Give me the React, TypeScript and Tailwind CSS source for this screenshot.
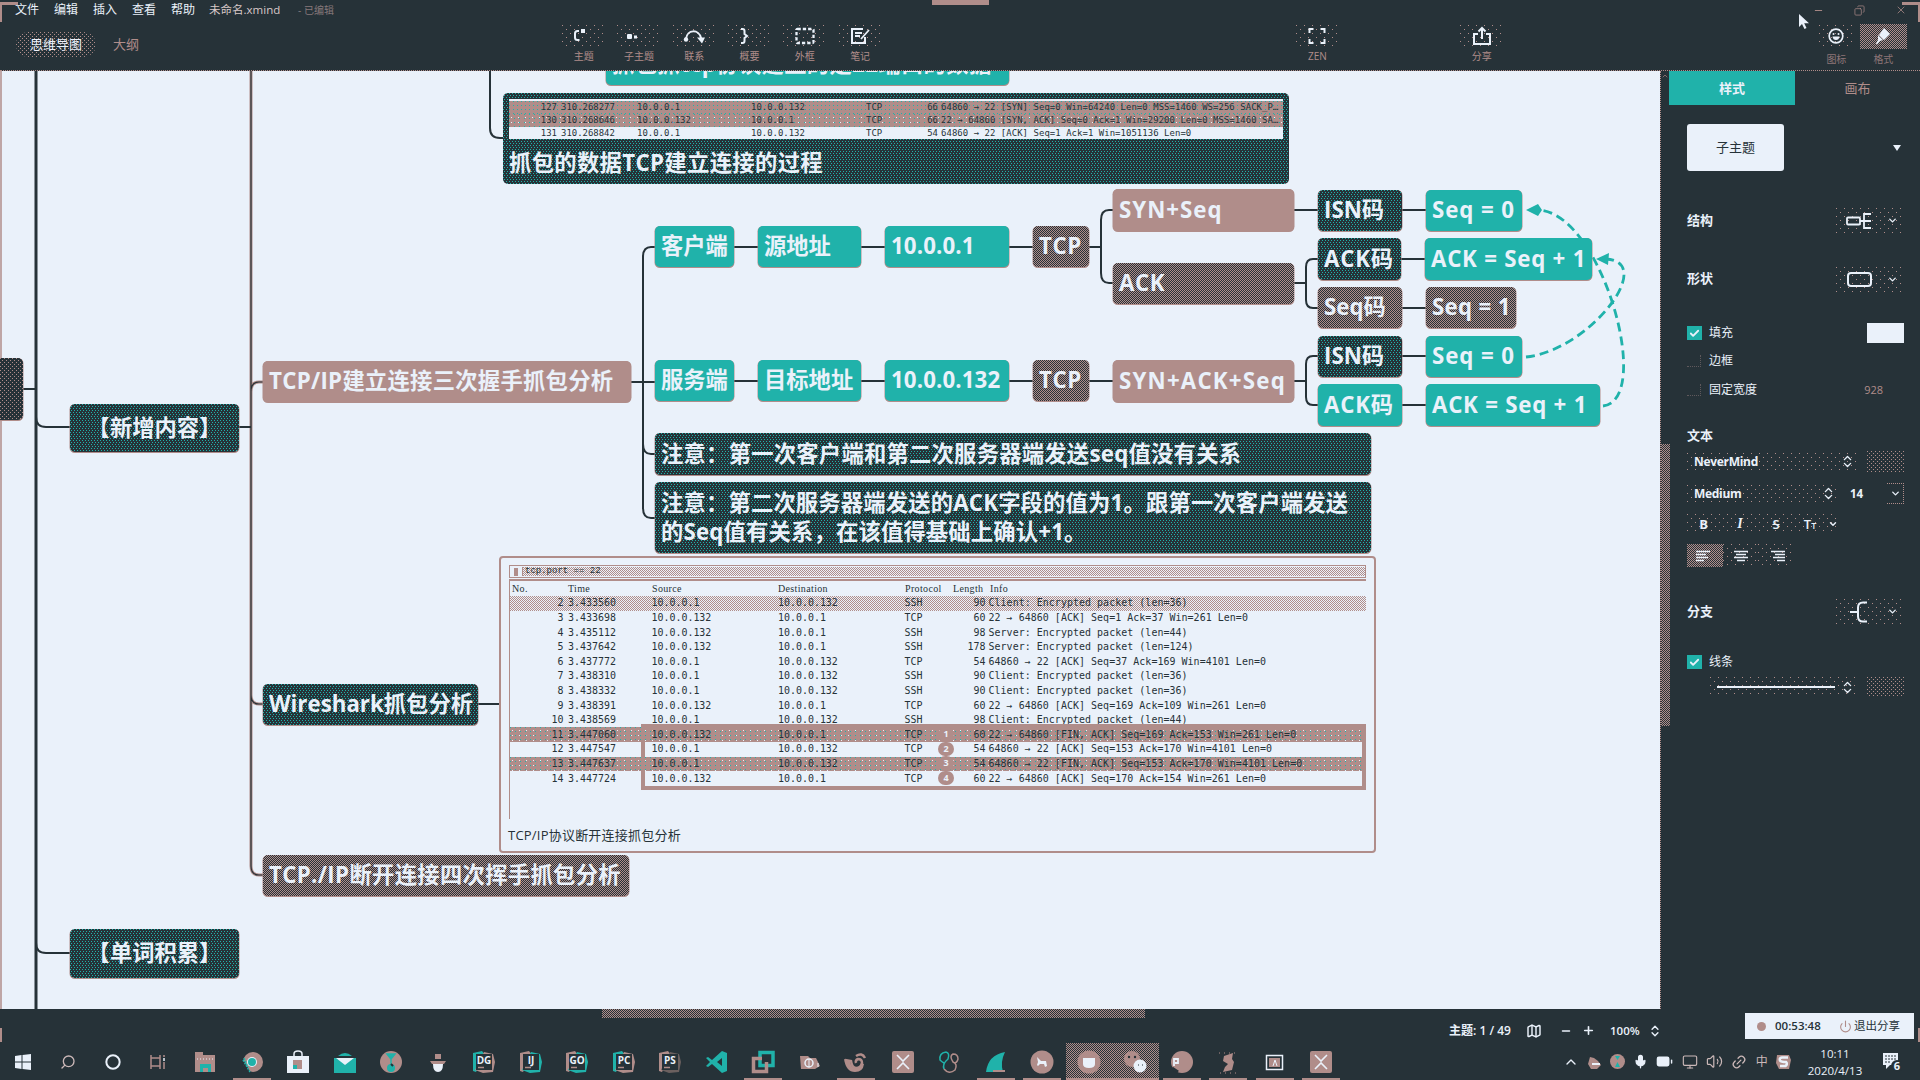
import React from "react";
import {
  Search,
  Circle,
  ChevronDown,
  ChevronUp,
  ChevronsUpDown,
  Minus,
  Plus,
  X,
  Copy,
  Power,
  Map as MapIcon,
  Mic,
  BatteryMedium,
  Monitor,
  Volume2,
  Link2,
  Check,
} from "lucide-react";

const TOP = 71;

/* ---------- textures ---------- */
const tealDots =
  "bg-[#263238] bg-[conic-gradient(from_0deg_at_1px_1px,transparent_75%,#20b2aa_0),conic-gradient(from_0deg_at_1px_1px,transparent_75%,#20b2aa_0)] bg-[length:3px_4px] bg-[position:0_0,1px_2px]";
const checker =
  "bg-[#263238] bg-[conic-gradient(from_0deg_at_1px_1px,transparent_75%,#b08d8a_0),conic-gradient(from_0deg_at_1px_1px,transparent_75%,#b08d8a_0)] bg-[length:2px_2px] bg-[position:0_0,1px_1px]";
const dim =
  "bg-[#263238] bg-[conic-gradient(from_0deg_at_1px_1px,transparent_75%,#b08d8a_0),conic-gradient(from_0deg_at_1px_1px,transparent_75%,#b08d8a_0)] bg-[length:4px_4px] bg-[position:0_0,2px_2px]";
const sparse =
  "bg-[conic-gradient(from_0deg_at_1px_1px,transparent_75%,#b08d8a_0),conic-gradient(from_0deg_at_1px_1px,transparent_75%,#b08d8a_0)] bg-[length:8px_8px] bg-[position:0_0,4px_4px]";
const medium =
  "bg-[conic-gradient(from_0deg_at_1px_1px,transparent_75%,#b08d8a_0),conic-gradient(from_0deg_at_1px_1px,transparent_75%,#b08d8a_0)] bg-[length:4px_4px] bg-[position:0_0,2px_2px]";
const dense =
  "bg-[conic-gradient(from_0deg_at_1px_1px,transparent_75%,#b08d8a_0),conic-gradient(from_0deg_at_1px_1px,transparent_75%,#b08d8a_0)] bg-[length:2px_2px] bg-[position:0_0,1px_1px]";
const roseTeal =
  "bg-[#b08d8a] bg-[conic-gradient(from_0deg_at_1px_1px,transparent_75%,#20b2aa_0)] bg-[length:4px_4px]";
const roseTealLight =
  "bg-[#b08d8a] bg-[conic-gradient(from_0deg_at_1px_1px,transparent_75%,#20b2aa_0),conic-gradient(from_0deg_at_1px_1px,transparent_75%,#eaf1fa_0)] bg-[length:5px_4px,7px_5px] bg-[position:0_0,2px_3px]";

const fills: Record<string, string> = {
  teal: "bg-[#20b2aa]",
  rose: "bg-[#b08d8a]",
  dark: tealDots,
  mix: checker,
  dim,
};

/* ---------- top bar ---------- */
function Tool({ label, children }: { label: string; children: React.ReactNode }) {
  return (
    <div className="flex w-[55.3px] shrink-0 flex-col items-center">
      <div className={`flex h-[21px] w-[43px] items-center justify-center ${sparse}`}>{children}</div>
      <span className="mt-[3px] text-[10px] leading-[14px] whitespace-nowrap text-[#b08d8a]">{label}</span>
    </div>
  );
}

const sv = { fill: "none", stroke: "#eaf1fa", strokeWidth: 2 } as const;

function Header() {
  return (
    <header className="relative h-[71px] shrink-0 border-b border-dotted border-[#b08d8a] bg-[#263238]">
      <div className="absolute top-[2px] left-0 h-[20px] w-[18px] border-t-[3px] border-l-2 border-[#b08d8a]" />
      <div className="absolute top-[2px] right-0 h-[20px] w-[18px] border-t-[3px] border-r-2 border-[#b08d8a]" />
      <div className="absolute top-0 left-[932px] h-[5px] w-[57px] bg-[#b08d8a]" />
      <div className="flex h-[20px] items-center gap-[15px] pl-[15px] text-[12px] leading-none text-[#eaf1fa]">
        <span>文件</span>
        <span>编辑</span>
        <span>插入</span>
        <span>查看</span>
        <span>帮助</span>
        <span className="-ml-px w-[74px] text-[11.500px] whitespace-nowrap text-[#d8c8c8]">未命名.xmind</span>
        <span className="text-[10px] whitespace-nowrap text-[#87797b]">- 已编辑</span>
        <div className="ml-auto flex items-center gap-[30px] pr-[13px] text-[#b08d8a]">
          <Minus size={11} strokeWidth={2} />
          <Copy size={11} strokeWidth={1.5} className="-scale-x-100" />
          <X size={12} strokeWidth={1.5} />
        </div>
      </div>
      <div className="flex h-[50px]">
        <div className="flex w-[556px] items-start pt-[12px] pl-[16px]">
          <div className={`flex h-[25px] w-[80px] items-center justify-center rounded-full text-[13px] text-[#eaf1fa] ${medium}`}>思维导图</div>
          <span className="ml-[17px] text-[13px] leading-[25px] text-[#b08d8a]">大纲</span>
        </div>
        <div className="flex pt-[5px]">
          <Tool label="主题">
            <svg width="20" height="18" viewBox="0 0 20 18" {...sv} className="mr-2">
              <path d="M9 4H7.500Q5 4 5 6.500v4Q5 13 7.500 13H9.500" />
              <rect x="11" y="2" width="4" height="4" fill="#eaf1fa" stroke="none" />
            </svg>
          </Tool>
          <Tool label="子主题">
            <svg width="20" height="16" viewBox="0 0 20 16" className="mr-3" fill="#eaf1fa">
              <rect x="4" y="6" width="5" height="5" rx="1" />
              <rect x="11" y="7.500" width="3" height="3" />
            </svg>
          </Tool>
          <Tool label="联系">
            <svg width="22" height="16" viewBox="0 0 22 16" {...sv}>
              <path d="M3 11C4 1 16 1 18 10" />
              <circle cx="3" cy="11.5" r="2.200" fill="#eaf1fa" stroke="none" />
              <path d="M14 9.500h8l-3 6z" fill="#eaf1fa" stroke="none" />
            </svg>
          </Tool>
          <Tool label="概要">
            <svg width="20" height="18" viewBox="0 0 20 18" {...sv} className="mr-3">
              <path d="M7 2h1.500q2 0 2 2v3l2.500 2-2.500 2v3q0 2-2 2H7" />
            </svg>
          </Tool>
          <Tool label="外框">
            <svg width="20" height="18" viewBox="0 0 20 18" {...sv} strokeWidth="2.300" strokeDasharray="3.300 2">
              <rect x="1.500" y="2" width="17" height="14" rx="1" />
            </svg>
          </Tool>
          <Tool label="笔记">
            <svg width="20" height="18" viewBox="0 0 20 18" {...sv}>
              <path d="M13 2H2v14h13V10" />
              <path d="M5 6h7M5 9h5M19 3l-8 9" strokeWidth="1.800" />
            </svg>
          </Tool>
        </div>
        <div className="flex pt-[5px] pl-[402px]">
          <Tool label="ZEN">
            <svg width="20" height="18" viewBox="0 0 20 18" {...sv}>
              <path d="M2.500 6V2h4M13.500 2h4v4M17.500 12v4h-4M6.500 16h-4v-4" />
            </svg>
          </Tool>
        </div>
        <div className="flex pt-[5px] pl-[109px]">
          <Tool label="分享">
            <svg width="20" height="20" viewBox="0 0 20 20" {...sv}>
              <path d="M6 8H2v10h16V8h-4M10 13V3M6.500 5.500L10 2l3.500 3.500" />
            </svg>
          </Tool>
        </div>
        <div className="flex pl-[303px]">
          <div className="flex w-[48px] flex-col items-center pt-[5px]">
            <div className={`flex h-[21px] w-[34px] items-center justify-center ${sparse}`}>
              <svg width="16" height="16" viewBox="0 0 16 16" {...sv} strokeWidth="1.700">
                <circle cx="8" cy="8" r="6.800" />
                <path d="M4.500 8.500h7Q11 12 8 12T4.500 8.500" fill="#eaf1fa" stroke="none" />
                <circle cx="5.500" cy="6" r="1" fill="#eaf1fa" stroke="none" />
                <circle cx="10.500" cy="6" r="1" fill="#eaf1fa" stroke="none" />
              </svg>
            </div>
            <span className="mt-[6px] text-[10px] leading-[14px] text-[#8d7577]">图标</span>
          </div>
          <div className="-ml-px flex w-[48px] flex-col items-center pt-[4px]">
            <div className={`flex h-[25px] w-[47px] items-center justify-center ${checker}`}>
              <svg width="18" height="17" viewBox="0 0 18 17" fill="#eaf1fa">
                <path d="M10 0l6 6-6 6-5-5z" />
                <path d="M4 7l5 5-3 1-3 3.500-1-1 2-3.500z" />
              </svg>
            </div>
            <span className="mt-[3px] text-[10px] leading-[14px] text-[#8d7577]">格式</span>
          </div>
        </div>
      </div>
      <svg className="absolute top-[13px] left-[1798px]" width="12" height="17" viewBox="0 0 12 17" fill="#eaf1fa">
        <path d="M1 1v13l3-3 2.500 5 2-1-2.300-4.800H11z" />
      </svg>
    </header>
  );
}

/* ---------- mind map ---------- */
type N = [x: number, y: number, r: number, b: number, fill: string, text: string, tracking?: number];
const nodes: N[] = [
  [606, 44, 1009, 85, "teal", "抓包抓tcp协议建立的是22端口的数据", 0.35],
  [655, 226, 734, 267, "teal", "客户端"],
  [758, 226, 861, 267, "teal", "源地址"],
  [885, 226, 1009, 267, "teal", "10.0.0.1", 0.1],
  [1033, 226, 1089, 267, "mix", "TCP", 0.6],
  [655, 360, 734, 401, "teal", "服务端"],
  [758, 360, 861, 401, "teal", "目标地址"],
  [885, 360, 1009, 401, "teal", "10.0.0.132", 0.1],
  [1033, 360, 1089, 401, "mix", "TCP", 0.6],
  [1113, 189, 1294, 231, "rose", "SYN+Seq", 1],
  [1113, 263, 1294, 304, "mix", "ACK", 0.6],
  [1113, 360, 1294, 402, "rose", "SYN+ACK+Seq", 1.2],
  [1318, 190, 1402, 231, "dark", "ISN码"],
  [1318, 238, 1401, 280, "dark", "ACK码", 0.8],
  [1318, 287, 1402, 328, "mix", "Seq码"],
  [1318, 336, 1402, 377, "dark", "ISN码"],
  [1318, 384, 1402, 426, "teal", "ACK码", 0.8],
  [1426, 190, 1522, 231, "teal", "Seq = 0", 0.9],
  [1425, 238, 1592, 280, "teal", "ACK = Seq + 1", 0.75],
  [1426, 287, 1516, 328, "mix", "Seq = 1", 0.3],
  [1426, 336, 1522, 377, "teal", "Seq = 0", 0.9],
  [1426, 384, 1600, 426, "teal", "ACK = Seq + 1", 0.75],
  [655, 433, 1371, 475, "dark", "注意：第一次客户端和第二次服务器端发送seq值没有关系", 0.25],
  [655, 482, 1371, 553, "dark", "注意：第二次服务器端发送的ACK字段的值为1。跟第一次客户端发送\n的Seq值有关系，在该值得基础上确认+1。", 0.18],
  [263, 361, 631, 402, "rose", "TCP/IP建立连接三次握手抓包分析", 0.28],
  [70, 404, 239, 452, "dark", "【新增内容】"],
  [263, 684, 478, 725, "dark", "Wireshark抓包分析"],
  [263, 855, 629, 896, "mix", "TCP./IP断开连接四次挥手抓包分析", 0.33],
  [70, 929, 239, 978, "dark", "【单词积累】"],
  [-20, 358, 23, 420, "dim", ""],
];

const links = [
  "M490 60V128Q490 138 500 138H503",
  "M23 389H36",
  "M36 60V1010",
  "M36 417Q36 427 46 427H70",
  "M36 943Q36 953 46 953H70",
  "M239 427H251",
  "M631 382H655",
  "M655 247H651Q643 247 643 257V508Q643 518 651 518H655",
  "M643 444Q643 454 651 454H655",
  "M734 247H758M861 247H885M1009 247H1033M1089 247H1101",
  "M734 381H758M861 381H885M1009 381H1033M1089 381H1113",
  "M1113 210H1109Q1101 210 1101 220V273Q1101 283 1109 283H1113",
  "M1294 210H1318M1294 283H1306M1294 381H1306",
  "M1318 259H1313Q1306 259 1306 267V300Q1306 308 1313 308H1318",
  "M1318 356H1313Q1306 356 1306 364V397Q1306 405 1313 405H1318",
  "M1402 210H1426M1401 259H1426M1402 308H1426M1402 356H1426M1402 405H1426",
  "M478 704H502",
];
const branch = "M251 60V866Q251 875 259 875H263M251 695Q251 704 259 704H263M251 392Q251 382 259 382H263";

function Links() {
  return (
    <svg className="absolute top-0 left-0" width="1660" height="938" viewBox="0 71 1660 938" fill="none">
      <path d="M1 60V1010" stroke="#b08d8a" strokeWidth="1.500" />
      <path d={branch} stroke="#b08d8a" strokeWidth="3" />
      <path d={branch} stroke="#263238" strokeWidth="1.200" />
      {links.map((d) => (
        <path key={d} d={d} stroke="#263238" strokeWidth={d === "M36 60V1010" ? 3 : 2} />
      ))}
      <g stroke="#20b2aa" strokeWidth="2.800" strokeDasharray="9 5">
        <path d="M1603 406C1654 400 1602 212 1538 210" />
        <path d="M1526 357C1590 350 1657 262 1606 259" />
      </g>
      <g fill="#20b2aa">
        <path d="M1526 210l12-6 4 6-4 6z" />
        <path d="M1596 259l13-6-1 12z" />
      </g>
    </svg>
  );
}

function MapNode({ n }: { n: N }) {
  const [x, y, r, b, fill, text, tracking = 0] = n;
  const centered = text.startsWith("【");
  return (
    <div
      className={`absolute flex items-center rounded-[5px] px-[6px] pb-[2px] text-[22.3px] leading-[29px] font-bold whitespace-pre text-[#eaf1fa] shadow-[0_0.5px_0_0.5px_#b08d8a] ${centered ? "justify-center" : ""} ${fills[fill]}`}
      style={{ left: x, top: y - TOP, width: r - x, height: b - y, letterSpacing: tracking }}
    >
      {text}
    </div>
  );
}

const topRows = [
  ["127", "310.268277", "10.0.0.1", "10.0.0.132", "66", "64860 → 22 [SYN] Seq=0 Win=64240 Len=0 MSS=1460 WS=256 SACK_P…"],
  ["130", "310.268646", "10.0.0.132", "10.0.0.1", "66", "22 → 64860 [SYN, ACK] Seq=0 Ack=1 Win=29200 Len=0 MSS=1460 SA…"],
  ["131", "310.268842", "10.0.0.1", "10.0.0.132", "54", "64860 → 22 [ACK] Seq=1 Ack=1 Win=1051136 Len=0"],
];

function CaptureTop() {
  return (
    <div className={`absolute top-[22px] left-[503px] h-[91px] w-[786px] rounded-[5px] px-[6px] pt-[6px] ${tealDots}`}>
      <div className="h-[40px] w-[774px] overflow-hidden border-t-2 border-[#eaf1fa] bg-[#eaf1fa] font-['DejaVu_Sans_Mono',monospace] text-[8.95px] leading-[13px] text-[#263238]">
        {topRows.map((r, i) => (
          <div key={i} className={`flex h-[13px] whitespace-pre ${i === 0 ? roseTeal : i === 1 ? roseTealLight : "bg-[#eaf1fa]"}`}>
            <span className="w-[48px] text-right">{r[0]}</span>
            <span className="w-[80px] pl-[4px]">{r[1]}</span>
            <span className="w-[114px]">{r[2]}</span>
            <span className="w-[115px]">{r[3]}</span>
            <span className="w-[40px]">TCP</span>
            <span className="w-[32px] text-right">{r[4]}</span>
            <span className="pl-[3px] tracking-[0.06px]">{r[5]}</span>
          </div>
        ))}
      </div>
      <div className="pt-[9px] text-[22.3px] leading-[30px] font-bold tracking-[0.35px] whitespace-nowrap text-[#eaf1fa]">抓包的数据TCP建立连接的过程</div>
    </div>
  );
}

const A = "10.0.0.1";
const B = "10.0.0.132";
const rows: string[][] = [
  ["2", "3.433560", A, B, "SSH", "90", "Client: Encrypted packet (len=36)"],
  ["3", "3.433698", B, A, "TCP", "60", "22 → 64860 [ACK] Seq=1 Ack=37 Win=261 Len=0"],
  ["4", "3.435112", B, A, "SSH", "98", "Server: Encrypted packet (len=44)"],
  ["5", "3.437642", B, A, "SSH", "178", "Server: Encrypted packet (len=124)"],
  ["6", "3.437772", A, B, "TCP", "54", "64860 → 22 [ACK] Seq=37 Ack=169 Win=4101 Len=0"],
  ["7", "3.438310", A, B, "SSH", "90", "Client: Encrypted packet (len=36)"],
  ["8", "3.438332", A, B, "SSH", "90", "Client: Encrypted packet (len=36)"],
  ["9", "3.438391", B, A, "TCP", "60", "22 → 64860 [ACK] Seq=169 Ack=109 Win=261 Len=0"],
  ["10", "3.438569", A, B, "SSH", "98", "Client: Encrypted packet (len=44)"],
  ["11", "3.447060", B, A, "TCP", "60", "22 → 64860 [FIN, ACK] Seq=169 Ack=153 Win=261 Len=0"],
  ["12", "3.447547", A, B, "TCP", "54", "64860 → 22 [ACK] Seq=153 Ack=170 Win=4101 Len=0"],
  ["13", "3.447637", A, B, "TCP", "54", "64860 → 22 [FIN, ACK] Seq=153 Ack=170 Win=4101 Len=0"],
  ["14", "3.447724", B, A, "TCP", "60", "22 → 64860 [ACK] Seq=170 Ack=154 Win=261 Len=0"],
];

function Capture() {
  return (
    <div className="absolute top-[485px] left-[499px] h-[297px] w-[877px] rounded-[4px] border-2 border-[#b08d8a] bg-[#eaf1fa] pt-[7px] pl-[8px] text-[#263238]">
      <div className="flex h-[13px] w-[857px] items-center border border-[#b08d8a]">
        <span className="ml-[4px] h-[8px] w-[4px] bg-[#b08d8a]" />
        <span className={`ml-[4px] flex h-[9px] flex-1 items-center border-l border-[#b08d8a] pl-[2px] font-['Liberation_Mono',monospace] text-[9px] leading-none whitespace-pre ${dense}`}>tcp.port == 22</span>
      </div>
      <div className="relative mt-[1px] h-[240px] w-[857px] border-t-2 border-l border-[#b08d8a]">
        <div className="flex h-[15px] items-center font-['Liberation_Serif',serif] text-[10px] leading-none tracking-[0.35px]">
          <span className="w-[58px] pl-[2px]">No.</span>
          <span className="w-[84px]">Time</span>
          <span className="w-[126px]">Source</span>
          <span className="w-[127px]">Destination</span>
          <span className="w-[48px]">Protocol</span>
          <span className="w-[37px]">Length</span>
          <span>Info</span>
        </div>
        <div className="font-['DejaVu_Sans_Mono',monospace] text-[9.95px] leading-[14px]">
          {rows.map((r, i) => (
            <div key={r[0]} className={`flex h-[14.62px] items-center whitespace-pre ${i === 0 ? dense : i === 9 || i === 11 ? roseTealLight : ""}`}>
              <span className="w-[53.5px] text-right">{r[0]}</span>
              <span className="w-[88px] pl-[4.5px]">{r[1]}</span>
              <span className="w-[126.500px]">{r[2]}</span>
              <span className="w-[126.500px]">{r[3]}</span>
              <span className="w-[40px]">{r[4]}</span>
              <span className="w-[41px] text-right">{r[5]}</span>
              <span className="pl-[3px] tracking-[0.05px]">{r[6]}</span>
            </div>
          ))}
        </div>
        <div className="absolute top-[143px] right-0 h-[66px] w-[725px] border-4 border-[#b08d8a]" />
        <div className="absolute top-[143px] left-[428px] flex flex-col text-center text-[9px] leading-[14.6px] font-bold text-[#eaf1fa]">
          {["1", "2", "3", "4"].map((d) => (
            <span key={d} className="h-[14.6px] w-[16px] translate-y-[3px] rounded-full bg-[#b08d8a]">
              {d}
            </span>
          ))}
        </div>
      </div>
      <div className="mt-[6px] -ml-px text-[13px] leading-[20px] tracking-[0.22px] whitespace-nowrap">TCP/IP协议断开连接抓包分析</div>
    </div>
  );
}

/* ---------- format panel ---------- */
const Stepper = () => <ChevronsUpDown size={15} strokeWidth={2.2} className="text-[#eaf1fa]" />;
const Tick = () => (
  <span className="flex h-[14px] w-[15px] items-center justify-center bg-[#20b2aa]">
    <Check size={11} strokeWidth={4} />
  </span>
);
const Empty = () => <span className="h-[12px] w-[14px] border-r border-b border-dotted border-[#5f595c]" />;

function Drop({ children }: { children: React.ReactNode }) {
  return (
    <div className={`ml-auto flex h-[25px] w-[68px] items-center pl-[6px] ${sparse}`}>
      <div className="flex w-[34px] justify-center">{children}</div>
      <ChevronDown size={11} strokeWidth={3} className="ml-[11px]" />
    </div>
  );
}

function Lines({ d }: { d: string }) {
  return (
    <svg width="14" height="12" viewBox="0 0 14 12" stroke="#eaf1fa" strokeWidth="1.500">
      <path d={d} />
    </svg>
  );
}

function Panel() {
  return (
    <aside className="flex w-[260px] bg-[#263238] text-[12px] text-[#eaf1fa]">
      <div className="flex w-[10px] shrink-0 flex-col border-l border-dotted border-[#b08d8a]">
        <ChevronUp size={8} className="mt-px text-[#b08d8a]" />
        <div className={`mt-[364px] h-[282px] w-[9px] ${checker}`} />
      </div>
      <div className="flex flex-1 flex-col">
        <div className="-ml-px flex h-[34px] text-[13px]">
          <div className="flex w-[126px] items-center justify-center bg-[#20b2aa] pt-px font-bold">样式</div>
          <div className="flex flex-1 items-center justify-center pt-px text-[#b08d8a]">画布</div>
        </div>
        <div className="flex flex-col pr-[16px] pl-[17px]">
          <div className="mt-[19px] flex h-[47px] items-center justify-between">
            <div className="flex h-[47px] w-[97px] items-center justify-center rounded-[3px] bg-[#eaf1fa] text-[13px] text-[#263238]">子主题</div>
            <svg width="8" height="6" viewBox="0 0 8 6" className="mr-[3px]" fill="#eaf1fa">
              <path d="M0 0h8L4 6z" />
            </svg>
          </div>
          <div className="mt-[37px] flex h-[25px] items-center text-[13px] font-bold">
            结构
            <Drop>
              <svg width="26" height="18" viewBox="0 0 26 18" fill="none" stroke="#eaf1fa" strokeWidth="1.800">
                <rect x="1" y="5.500" width="13" height="7" rx="1" />
                <path d="M14 9h11M25 2h-7v14h7" />
              </svg>
            </Drop>
          </div>
          <div className="mt-[33px] flex h-[26px] items-center text-[13px] font-bold">
            形状
            <Drop>
              <span className="h-[15px] w-[25px] rounded-[4px] border-2 border-[#eaf1fa]" />
            </Drop>
          </div>
          <div className="mt-[31px] flex h-[20px] items-center gap-[7px]">
            <Tick />
            填充
            <span className="ml-auto h-[20px] w-[37px] bg-[#eaf1fa]" />
          </div>
          <div className="mt-[8px] flex h-[20px] items-center gap-[8px]">
            <Empty />
            边框
          </div>
          <div className="mt-[9px] flex h-[20px] items-center gap-[8px]">
            <Empty />
            固定宽度
            <span className="mr-[21px] ml-auto text-[11px] text-[#b08d8a]">928</span>
          </div>
          <div className="mt-[26px] flex h-[20px] items-center text-[13px] font-bold">文本</div>
          <div className="mt-[5px] flex h-[21px] items-center justify-between text-[12px] font-bold">
            <div className={`flex h-[18px] w-[171px] items-center justify-between pr-[3px] pl-[7px] ${sparse}`}>
              <span className="tracking-[-0.3px]">NeverMind</span>
              <Stepper />
            </div>
            <span className={`h-[21px] w-[37px] ${medium}`} />
          </div>
          <div className="mt-[11px] flex h-[21px] items-center font-bold">
            <div className={`flex h-[18px] w-[151px] items-center justify-between pr-[2px] pl-[7px] ${sparse}`}>
              <span className="tracking-[-0.3px]">Medium</span>
              <Stepper />
            </div>
            <span className="ml-[12px] text-[11.500px]">14</span>
            <span className="ml-auto flex h-[21px] w-[17px] items-center justify-center border border-l-0 border-dotted border-[#b08d8a]">
              <ChevronDown size={11} strokeWidth={3} />
            </span>
          </div>
          <div className={`mt-[10px] flex h-[20px] w-[151px] items-center text-[13px] leading-none font-semibold ${sparse}`}>
            <span className="w-[33px] text-center font-bold">B</span>
            <span className="w-[40px] text-center font-['Liberation_Serif',serif] text-[14px] italic">I</span>
            <span className="w-[32px] text-center line-through">S</span>
            <span className="w-[36px] text-center">
              T<span className="text-[9px]">T</span>
            </span>
            <ChevronDown size={10} strokeWidth={3.5} />
          </div>
          <div className="mt-[10px] flex h-[23px]">
            <span className={`flex w-[36px] items-center justify-center pr-[4px] ${checker}`}>
              <Lines d="M0 1.500h14M0 4.500h10M0 7.500h12M0 10.500h8" />
            </span>
            <span className={`flex w-[35px] items-center justify-center ${sparse}`}>
              <Lines d="M0 1.500h14M2 4.500h10M0 7.500h14M3 10.500h8" />
            </span>
            <span className={`flex w-[36px] items-center justify-center pl-[4px] ${sparse}`}>
              <Lines d="M0 1.500h14M4 4.500h10M2 7.500h12M6 10.500h8" />
            </span>
          </div>
          <div className="mt-[32px] flex h-[25px] items-center text-[13px] font-bold">
            分支
            <Drop>
              <svg width="18" height="22" viewBox="0 0 18 22" fill="none" stroke="#eaf1fa" strokeWidth="2">
                <path d="M0 11h8M17 1.500h-4q-5 0-5 5v9q0 5 5 5h4" />
              </svg>
            </Drop>
          </div>
          <div className="mt-[28px] flex h-[20px] items-center gap-[7px]">
            <Tick />
            线条
          </div>
          <div className="mt-[5px] flex h-[20px] items-center justify-between pl-[23px]">
            <div className={`flex h-[20px] w-[148px] items-center justify-between pr-[3px] pl-[7px] ${sparse}`}>
              <span className="h-[2px] w-[118px] bg-[#eaf1fa]" />
              <Stepper />
            </div>
            <span className={`h-[20px] w-[37px] ${medium}`} />
          </div>
        </div>
      </div>
    </aside>
  );
}

/* ---------- status bar ---------- */
function StatusBar() {
  return (
    <div className="relative h-[34px] shrink-0 bg-[#263238] text-[12px] text-[#eaf1fa]">
      <div className={`ml-[602px] h-[9px] w-[543px] ${checker}`} />
      <div className="flex h-[25px] items-center pl-[1449px] font-semibold">
        <span className="w-[77px] whitespace-nowrap">主题: 1 / 49</span>
        <MapIcon size={16} strokeWidth={2.2} />
        <Minus size={12} strokeWidth={3} className="ml-[18px]" />
        <Plus size={13} strokeWidth={3} className="ml-[10px]" />
        <span className="ml-[15px] w-[38px] text-[11.500px]">100%</span>
        <ChevronsUpDown size={14} strokeWidth={2.4} />
      </div>
      <div className="absolute top-[4px] left-[1745px] z-10 flex h-[26px] w-[169px] items-center bg-[#eaf1fa] pl-[12px] text-[12px] text-[#263238]">
        <span className="h-[9px] w-[9px] rounded-full bg-[#b08d8a]" />
        <span className="ml-[9px] w-[64px] text-[11.500px] font-semibold">00:53:48</span>
        <Power size={13} strokeWidth={2} className="mr-[2px] text-[#b08d8a]" />
        <span className="text-[11.500px] whitespace-nowrap">退出分享</span>
      </div>
      <div className="absolute top-[19px] left-0 h-[14px] w-[2px] bg-[#b08d8a]" />
      <div className="absolute top-[19px] right-0 h-[14px] w-[2px] bg-[#b08d8a]" />
    </div>
  );
}

/* ---------- taskbar ---------- */
const R = "#b08d8a";
const T = "#20b2aa";
const W = "#eaf1fa";
const D = "#263238";

function Ide({ t, a, b }: { t: string; a: string; b: string }) {
  return (
    <svg width="24" height="24" viewBox="0 0 24 24">
      <path d="M1 3l9-2 3 4-9 17-3-1z" fill={a} />
      <path d="M12 2l9 2 2 8-2 10-10 1-8-3z" fill={b} />
      <rect x="4" y="4" width="16" height="16" fill={D} />
      <text x="12" y="14" textAnchor="middle" fontSize="10" fontWeight="700" fill={W} fontFamily="Open Sans, sans-serif">{t}</text>
      <path d="M6 17.500h6" stroke={R} strokeWidth="1.500" />
    </svg>
  );
}

const XTile = () => (
  <svg width="24" height="24" viewBox="0 0 24 24">
    <rect x="1" y="1" width="22" height="22" rx="2" fill={R} />
    <path d="M6 5l6 6 6-6M6 19l6-6 6 6" stroke={W} strokeWidth="1.600" fill="none" />
  </svg>
);

const G = ({ children }: { children: React.ReactNode }) => (
  <svg width="24" height="24" viewBox="0 0 24 24" fill="none">
    {children}
  </svg>
);

const apps: { icon: React.ReactNode; on?: boolean; active?: boolean }[] = [
  { icon: <G><path d="M2 2h8v3h12v17H2z" fill={R} /><path d="M7 22v-8h11v8h-3v-4h-5v4z" fill={T} /><path d="M4 9h16" stroke={W} strokeDasharray="1 2" /></G> },
  { icon: <G><circle cx="13" cy="12" r="10" fill={R} /><path d="M3 9l8 14-6-4q-3-4-2-10" fill={D} /><path d="M3 10l7 12M4 8l4 9" stroke={T} strokeWidth="1.500" strokeDasharray="2 1" /><circle cx="12" cy="12" r="5" fill={W} /><circle cx="12" cy="12" r="4" fill={T} /></G>, on: true },
  { icon: <G><path d="M8 7V4q0-3 4-3t4 3v3" stroke={W} strokeWidth="1.500" /><rect x="1" y="6" width="22" height="17" fill={W} /><path d="M7 10h9v9H7z" fill={R} /><path d="M7 15h4v4H7z" fill={T} /></G> },
  { icon: <G><path d="M1 8h22v15H1z" fill={T} /><path d="M3 8h18l-9 7z" fill={W} /><path d="M5 6q7-6 14 0z" fill={T} /></G> },
  { icon: <G><circle cx="12" cy="12" r="11" fill={R} /><path d="M8 4h8l-4 5zM12 8v8" fill={T} stroke={T} strokeWidth="1.500" /><circle cx="12" cy="18" r="4" fill={T} /><path d="M12 14l2 2" stroke={D} strokeWidth="2" /></G> },
  { icon: <G><path d="M9 4h6v5H9z" fill={R} /><path d="M4 11h16l-2 3H6z" fill={R} /><path d="M7 14h10q0 8-5 8t-5-8" fill={W} /></G> },
  { icon: <Ide t="DG" a={T} b={R} /> },
  { icon: <Ide t="IJ" a={R} b={T} /> },
  { icon: <Ide t="GO" a={R} b={T} /> },
  { icon: <Ide t="PC" a={T} b={R} /> },
  { icon: <Ide t="PS" a={R} b="#6b605f" /> },
  { icon: <G><path d="M17 1l5 2v18l-5 2L7 14l-4 3-2-1 4-4-4-4 2-1 4 3zM17 8l-5 4 5 4z" fill={T} fillRule="evenodd" /></G> },
  { icon: <G><rect x="9" y="2.500" width="13" height="13" stroke={T} strokeWidth="3.500" /><path d="M15.500 12v9.500h-13v-13H11" stroke={R} strokeWidth="3.500" /></G>, on: true },
  { icon: <G><path d="M2 6h8l2 2h6l4 8-5 3H3z" fill={R} /><circle cx="11" cy="13" r="4" stroke={W} strokeWidth="1.500" /><path d="M11 9v8M20 13v4" stroke={W} /></G> },
  { icon: <G><path d="M1 10l6 1q1 7 5 7 5 0 6-5 0-4-4-4-3 1-2 4" stroke={R} strokeWidth="2.500" /><path d="M0 9q2 13 11 13 8 0 9-8l-3-1q-1 5-6 5-4 0-5-7z" fill={R} /><path d="M12 6q6-4 9 2" stroke={R} strokeWidth="2.500" /></G>, on: true },
  { icon: <XTile /> },
  { icon: <G><path d="M9 2q4 1 2 7-6 5-4 10M9 2Q2 3 3 10q2 2 4 3" stroke={T} strokeWidth="1.500" /><path d="M7 19q5 6 11 1 3-6-2-8-4-6 0-8 5 0 5 5-1 4-4 4" stroke={R} strokeWidth="1.500" /></G> },
  { icon: <G><path d="M2 22Q4 5 21 2q-5 10-2 20z" fill={T} /><path d="M9 21h12" stroke={R} strokeWidth="2" /></G>, on: true },
  { icon: <G><circle cx="12" cy="12" r="11.500" fill={R} /><path d="M7 7l4 4h5l1 5-2 1-1-3h-4l-2 2-1-1 1-3z" fill={W} /></G>, on: true },
  { icon: <G><circle cx="12" cy="12" r="11.500" fill={R} /><path d="M6 8h12v6q0 4-6 4t-6-4z" fill={W} /></G>, active: true, on: true },
  { icon: <G><circle cx="9" cy="9" r="8" fill={R} /><circle cx="6" cy="7" r="1.200" fill={D} /><circle cx="12" cy="7" r="1.200" fill={D} /><circle cx="17" cy="16" r="6.500" fill={W} /><path d="M15 15h1M19 15h1" stroke={D} /></G>, active: true, on: true },
  { icon: <G><circle cx="12" cy="12" r="11" fill={R} /><path d="M4 16V9h4v4H5" stroke={W} strokeWidth="1.800" /><path d="M2 18l6 4" stroke={D} strokeWidth="3" /></G>, on: true },
  { icon: <G><path d="M8 6l9-3-1 6 2 3-2 8-9 2 2-5 3-3-5-3z" fill={R} /><path d="M3 3h18M4 23h16" stroke={R} strokeDasharray="1 4" /></G>, on: true },
  { icon: <G><rect x="3.500" y="5.500" width="16" height="14" stroke={W} strokeWidth="1.500" /><rect x="6" y="8" width="11" height="9" fill={R} /><path d="M10 16l2-6 2 6" stroke={W} /></G>, on: true },
  { icon: <XTile />, on: true },
];

function Taskbar() {
  return (
    <footer className="flex h-[37px] shrink-0 items-stretch bg-[#263238] text-[#eaf1fa]">
      <div className="flex w-[182px] [&>*]:flex [&>*]:w-[45px] [&>*]:items-center [&>*]:justify-center">
        <span>
          <svg width="16" height="16" viewBox="0 0 16 16" fill={W}>
            <path d="M0 2l6.500-1v6.500H0zM7.500 1L16 0v7.500H7.500zM0 8.500h6.500V15L0 14zM7.500 8.500H16V16l-8.500-1z" />
          </svg>
        </span>
        <span>
          <Search size={16} strokeWidth={2} className="-scale-x-100 text-[#cbb8b8]" />
        </span>
        <span>
          <Circle size={16} strokeWidth={3} />
        </span>
        <span>
          <svg width="16" height="16" viewBox="0 0 16 16" fill="none" stroke={R} strokeWidth="1.500">
            <path d="M1 1v3h9V1M1 15v-3h9v3M1 4v8M10 4v8M14 1v2M14 8v7" />
            <path d="M14 4v3" stroke={W} />
          </svg>
        </span>
      </div>
      {apps.map((a, i) => (
        <div
          key={i}
          className={`relative flex w-[46.5px] shrink-0 items-center justify-center ${a.active ? checker : ""}`}
        >
          {a.icon}
          {a.on && <span className={`absolute bottom-0 h-[2px] bg-[#b08d8a] ${a.active ? "w-full" : "w-[38px]"}`} />}
        </div>
      ))}
      <div className="ml-auto flex items-center">
        <div className="flex w-[228px] items-center justify-between">
          <ChevronUp size={16} strokeWidth={2} />
          <svg width="14" height="14" viewBox="0 0 14 14">
            <path d="M3 2l4 1 4 3 3 4-4 4H4L1 9z" fill={R} />
            <path d="M5 9h8" stroke={W} strokeWidth="2" />
          </svg>
          <svg width="15" height="15" viewBox="0 0 15 15">
            <circle cx="7.500" cy="7.500" r="7.500" fill={R} />
            <path d="M5 2h5l-2.500 4zM5 13h5l-2.500-5z" fill={T} />
          </svg>
          <Mic size={15} fill={W} />
          <BatteryMedium size={17} fill={W} />
          <Monitor size={16} className="text-[#cbb8b8]" strokeWidth={1.7} />
          <Volume2 size={17} className="text-[#cbb8b8]" strokeWidth={1.7} />
          <Link2 size={16} className="-rotate-45 text-[#cbb8b8]" />
          <span className="text-[12px] text-[#cbb8b8]">中</span>
          <svg width="15" height="15" viewBox="0 0 15 15">
            <path d="M1 1h12l2 5-2 9H3L0 9z" fill={R} />
            <path d="M12 3.500H6Q3 4 4 6.500q1 1.500 6 1.500 2 2-.500 4H4" fill="none" stroke={W} strokeWidth="2.500" />
          </svg>
        </div>
        <div className="ml-[15px] flex w-[58px] flex-col items-center text-[11.500px] leading-[17px]">
          <span>10:11</span>
          <span>2020/4/13</span>
        </div>
        <svg width="20" height="20" viewBox="0 0 20 20" className="mr-[18px] ml-[18px]">
          <path d="M1 1h15v12H8l-4 4v-4H1z" fill={W} />
          <path d="M3 4h11M3 7h11M3 10h6" stroke={D} strokeDasharray="2 1" />
          <circle cx="15" cy="14" r="6" fill={D} />
          <text x="15" y="18" fontSize="11" fontWeight="700" textAnchor="middle" fill={W} fontFamily="Open Sans, sans-serif">6</text>
        </svg>
      </div>
    </footer>
  );
}

export default function App() {
  return (
    <div className="flex h-[1080px] w-[1920px] flex-col overflow-hidden bg-[#263238] font-['Open_Sans','Noto_Sans_CJK_SC',sans-serif]">
      <Header />
      <div className="flex h-[938px] shrink-0">
        <main className="relative w-[1660px] shrink-0 overflow-hidden bg-[#eaf1fa]">
          <Links />
          {nodes.map((n, i) => (
            <MapNode key={i} n={n} />
          ))}
          <CaptureTop />
          <Capture />
        </main>
        <Panel />
      </div>
      <StatusBar />
      <Taskbar />
    </div>
  );
}
